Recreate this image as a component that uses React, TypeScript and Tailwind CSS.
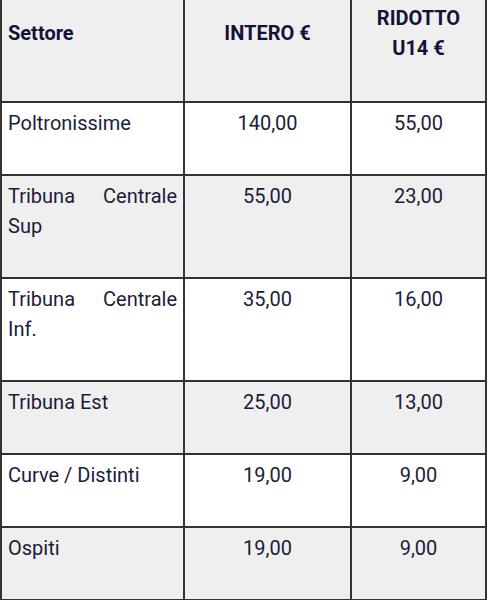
const rows = [
  { settore: "Poltronissime", intero: "140,00", ridotto: "55,00" },
  { settore: "Tribuna Centrale Sup", intero: "55,00", ridotto: "23,00" },
  { settore: "Tribuna Centrale Inf.", intero: "35,00", ridotto: "16,00" },
  { settore: "Tribuna Est", intero: "25,00", ridotto: "13,00" },
  { settore: "Curve / Distinti", intero: "19,00", ridotto: "9,00" },
  { settore: "Ospiti", intero: "19,00", ridotto: "9,00" },
];

export default function App() {
  return (
    <div className="w-[488px] h-[600px] overflow-hidden bg-white font-['Roboto',sans-serif]">
      <table className="table-fixed border-separate border-spacing-0 w-[487px] text-[20px] leading-[30px]">
        <thead>
          <tr className="bg-[#efefef] text-[#13133a] font-bold">
            <th className="w-[185px] border-l-2 border-r-2 border-b-2 border-[#333] px-[6px] pt-[3px] pb-[38px] text-left align-middle">
              Settore
            </th>
            <th className="w-[167px] border-r-2 border-b-2 border-[#333] px-[6px] pt-[3px] pb-[38px] text-center align-middle">
              INTERO €
            </th>
            <th className="w-[135px] border-r-2 border-b-2 border-[#333] px-[6px] pt-[3px] pb-[38px] text-center align-middle">
              RIDOTTO U14 €
            </th>
          </tr>
        </thead>
        <tbody className="text-[#1c1c3a]">
          {rows.map((r, i) => (
            <tr key={r.settore} className={i % 2 === 0 ? "bg-white" : "bg-[#efefef]"}>
              <td className="border-l-2 border-r-2 border-b-2 border-[#333] px-[6px] pt-[5px] pb-[36px] text-justify align-top">
                {r.settore}
              </td>
              <td className="border-r-2 border-b-2 border-[#333] px-[6px] pt-[5px] pb-[36px] text-center align-top">
                {r.intero}
              </td>
              <td className="border-r-2 border-b-2 border-[#333] px-[6px] pt-[5px] pb-[36px] text-center align-top">
                {r.ridotto}
              </td>
            </tr>
          ))}
        </tbody>
      </table>
    </div>
  );
}
